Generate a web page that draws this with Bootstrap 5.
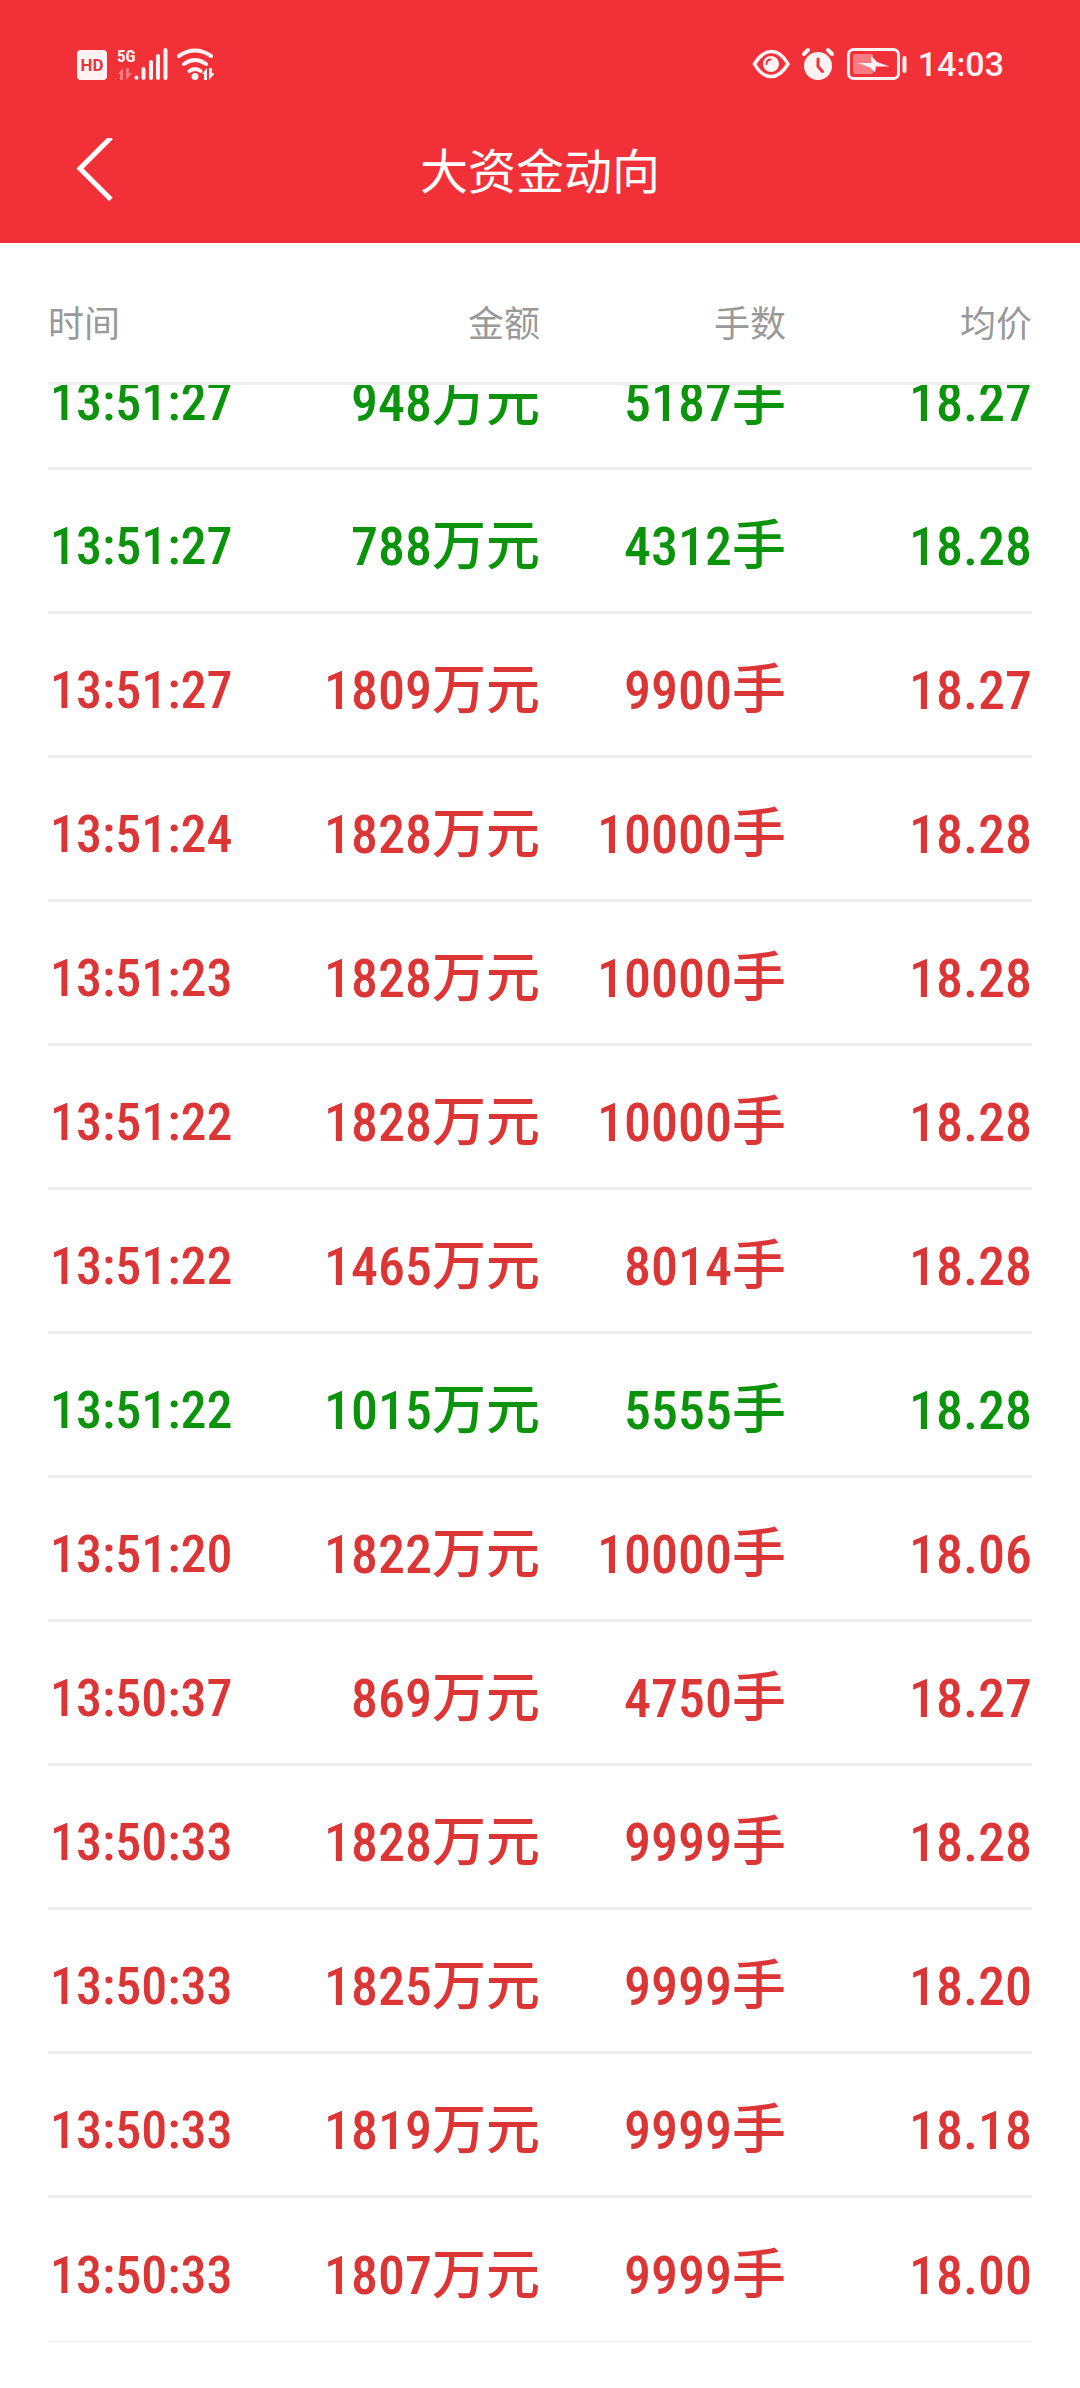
<!DOCTYPE html>
<html lang="zh-CN">
<head>
<meta charset="utf-8">
<meta name="viewport" content="width=device-width, initial-scale=1">
<title>大资金动向</title>
<link href="https://cdn.jsdelivr.net/npm/bootstrap@5.3.0/dist/css/bootstrap.min.css" rel="stylesheet">
<style>
  body { font-family: Roboto, "Noto Sans CJK SC", sans-serif; background: #fff; }
  .app-top { background: #f23038; color: #fff; }
  .status-bar { height: 128px; padding: 0 76px; color: #fff2f3; }
  .status-clock { font-size: 34px; line-height: 40px; font-weight: 500; }
  .title-bar { display: grid; grid-template-columns: 1fr auto 1fr; height: 115px; padding: 0 68px 26px; }
  .app-title { font-size: 48px; line-height: 64px; font-weight: 400; }
  .trade-scroll { padding: 0 48px 48px; scrollbar-width: none; }
  .trade-scroll::-webkit-scrollbar { display: none; }
  .trades { table-layout: fixed; width: 100%; border-collapse: separate; border-spacing: 0; }
  .trades th, .trades td { padding: 0; vertical-align: middle; white-space: nowrap; text-align: right; border-bottom: 3px solid #eee; }
  .trades th:first-child, .trades td:first-child { text-align: left; }
  .trades thead th { position: sticky; top: 0; height: 142px; padding-top: 24px; background: #fff; color: #999; font-size: 36px; line-height: 48px; font-weight: 400; }
  .trades td { height: 144px; padding-top: 12px; font-family: "Roboto Condensed", "Noto Sans CJK SC", sans-serif; font-size: 54px; line-height: 72px; font-weight: 500; color: #db3535; }
  .trades td:first-child { font-size: 52px; padding-left: 2px; }
  .trades tr.sell td { color: #0b940b; }
  .trades tr:last-child td { border-bottom-width: 1px; }
  .trades .unit { font-size: 54px; }
</style>
</head>
<body>
<div class="d-flex flex-column vh-100">
  <header class="app-top flex-shrink-0">
    <div class="status-bar d-flex align-items-center justify-content-between">
      <svg width="138" height="36" viewBox="76 46 138 36" fill="currentColor" role="img" aria-label="HD 5G 信号 无线网络">
        <rect x="77" y="50" width="30" height="30" rx="4"/>
        <text x="92" y="71" text-anchor="middle" font-family="Roboto" font-weight="700" font-size="17" fill="#e2363f">HD</text>
        <text x="117" y="62" font-family="Roboto Condensed, Roboto" font-weight="700" font-size="17">5G</text>
        <path opacity=".38" d="M118 74l5-6v12h-3v-6zM126 68v12l6-7h-3v-5z"/>
        <path fill="none" stroke="currentColor" stroke-width="4" stroke-linecap="round" d="M136.500 77.500v.2M143.500 69v9M151 62v16M158 56v22M165.500 50v28"/>
        <path fill="none" stroke="currentColor" stroke-width="4" stroke-linecap="round" d="M179 56q16-11 32 0M184 64q11-8 22 0M189.500 71q5.500-4 11 0"/>
        <circle cx="195" cy="76.500" r="3.500"/>
        <path d="M202 74l5-6v12h-3v-6zM209 68v12l6-7h-3v-5z"/>
      </svg>
      <div class="d-flex align-items-center">
        <svg width="166" height="36" viewBox="754 46 166 36" fill="none" stroke="currentColor" role="img" aria-label="护眼 闹钟 充电中">
          <path stroke-width="3.500" d="M756.500 64Q764 51.500 773.500 51.500T790 64Q782.500 76.500 773 76.500T756.500 64z"/>
          <circle cx="773" cy="64" r="8" fill="currentColor" stroke="none"/>
          <path stroke="#f23038" stroke-width="2" stroke-linecap="round" d="M768.500 64q0-4 4-4.500"/>
          <circle cx="820" cy="66" r="14" fill="currentColor" stroke="none"/>
          <path stroke-width="4" stroke-linecap="round" d="M806 54l4-4M830 50l4 4"/>
          <path stroke="#f23038" stroke-width="3" stroke-linecap="round" d="M820 59v7.500l4.500 5"/>
          <rect x="850.500" y="49.500" width="50" height="29" rx="5" stroke-width="3"/>
          <rect x="855" y="54" width="20" height="20" rx="2" fill="currentColor" fill-opacity=".4" stroke="none"/>
          <path d="M860 63l13.500 0-.5-7.500 6 6.500 12.500 4.500-13.500 0-1 6-5-5z" fill="currentColor" stroke="none"/>
          <path stroke-width="4" stroke-linecap="round" d="M906.500 58v13"/>
        </svg>
        <span class="status-clock">14:03</span>
      </div>
    </div>
    <nav class="title-bar align-items-center">
      <button type="button" class="btn p-0 border-0 text-white text-start lh-1" aria-label="返回">
        <svg width="52" height="70" viewBox="68 138 52 70" fill="none" stroke="currentColor" stroke-width="5"><path d="M111 137.500L80 168.500l31 31"/></svg>
      </button>
      <h1 class="app-title m-0">大资金动向</h1>
      <span></span>
    </nav>
  </header>

  <main class="trade-scroll flex-grow-1 overflow-auto" id="tradeScroll">
    <table class="trades">
      <thead><tr><th scope="col">时间</th><th scope="col">金额</th><th scope="col">手数</th><th scope="col">均价</th></tr></thead>
      <tbody>
        <tr class="sell"><td>13:51:27</td><td>948<span class="unit">万元</span></td><td>5187<span class="unit">手</span></td><td>18.27</td></tr>
        <tr class="sell"><td>13:51:27</td><td>788<span class="unit">万元</span></td><td>4312<span class="unit">手</span></td><td>18.28</td></tr>
        <tr><td>13:51:27</td><td>1809<span class="unit">万元</span></td><td>9900<span class="unit">手</span></td><td>18.27</td></tr>
        <tr><td>13:51:24</td><td>1828<span class="unit">万元</span></td><td>10000<span class="unit">手</span></td><td>18.28</td></tr>
        <tr><td>13:51:23</td><td>1828<span class="unit">万元</span></td><td>10000<span class="unit">手</span></td><td>18.28</td></tr>
        <tr><td>13:51:22</td><td>1828<span class="unit">万元</span></td><td>10000<span class="unit">手</span></td><td>18.28</td></tr>
        <tr><td>13:51:22</td><td>1465<span class="unit">万元</span></td><td>8014<span class="unit">手</span></td><td>18.28</td></tr>
        <tr class="sell"><td>13:51:22</td><td>1015<span class="unit">万元</span></td><td>5555<span class="unit">手</span></td><td>18.28</td></tr>
        <tr><td>13:51:20</td><td>1822<span class="unit">万元</span></td><td>10000<span class="unit">手</span></td><td>18.06</td></tr>
        <tr><td>13:50:37</td><td>869<span class="unit">万元</span></td><td>4750<span class="unit">手</span></td><td>18.27</td></tr>
        <tr><td>13:50:33</td><td>1828<span class="unit">万元</span></td><td>9999<span class="unit">手</span></td><td>18.28</td></tr>
        <tr><td>13:50:33</td><td>1825<span class="unit">万元</span></td><td>9999<span class="unit">手</span></td><td>18.20</td></tr>
        <tr><td>13:50:33</td><td>1819<span class="unit">万元</span></td><td>9999<span class="unit">手</span></td><td>18.18</td></tr>
        <tr><td>13:50:33</td><td>1807<span class="unit">万元</span></td><td>9999<span class="unit">手</span></td><td>18.00</td></tr>
      </tbody>
    </table>
  </main>
</div>
<script src="https://cdn.jsdelivr.net/npm/bootstrap@5.3.0/dist/js/bootstrap.bundle.min.js"></script>
<script>
  // Open the list part-way through the newest trade
  document.getElementById('tradeScroll').scrollTop = 59;
</script>
</body>
</html>
